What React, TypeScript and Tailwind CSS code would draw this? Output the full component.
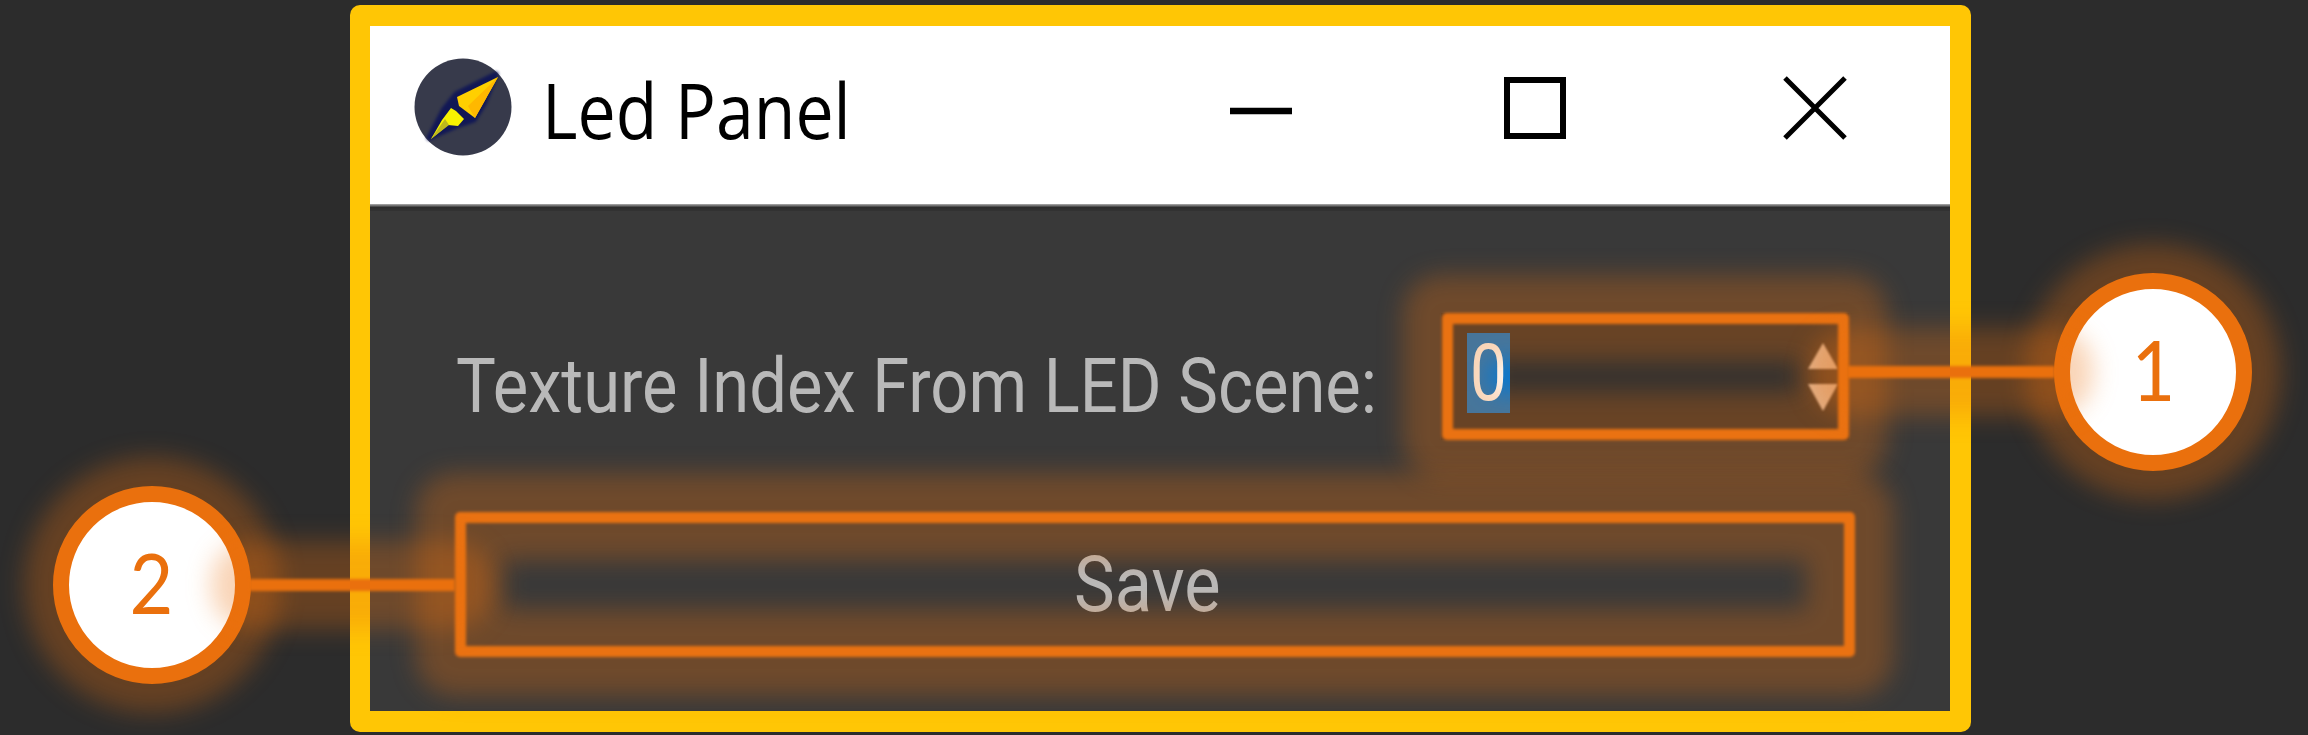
import type { ReactNode } from "react";

function Highlight({ children, className }: { children?: ReactNode; className: string }) {
  return (
    <div className={`relative shrink-0 ${className}`}>
      {children}
      <div className="absolute -inset-[38px] rounded-[38px] border-[87px] border-[#ea700d]/30 blur-[12px]" />
      <div className="absolute inset-[0.5px] rounded-[5px] border-[11px] border-[#ea7212] blur-[1.6px]" />
    </div>
  );
}

function Badge({ label, className }: { label: string; className: string }) {
  return (
    <div className={`absolute h-[198px] w-[198px] ${className}`}>
      <div className="absolute -inset-[29px] rounded-full bg-[#ea700d]/30 blur-[12px]" />
      <div className="relative flex h-full w-full items-center justify-center rounded-full border-[16px] border-[#ea700d] bg-white pb-[6px]">
        <span className="inline-block scale-x-[0.9] font-['Lato',sans-serif] text-[84px] leading-none text-[#ea700d]">{label}</span>
      </div>
    </div>
  );
}

function Connector({ className }: { className: string }) {
  return (
    <div className={`absolute h-[12px] ${className}`}>
      <div className="absolute -inset-[38px] rounded-[40px] bg-[#ea700d]/30 blur-[12px]" />
      <div className="absolute inset-0 bg-[#ea700d] blur-[1.8px]" />
    </div>
  );
}

function CompassIcon() {
  return (
    <svg viewBox="0 0 98 98" className="h-[98px] w-[98px] shrink-0">
      <circle cx="49" cy="49" r="48.5" fill="#373a4b" />
      <path className="blur-[1.5px]" d="M82 16 L42 36 L30 51 L15 80 L40 69 L60 62 L70 46 Z" fill="#0b1257" stroke="#0b1257" strokeWidth="5" strokeLinejoin="round" opacity=".85" />
      <g className="blur-[0.7px]">
        <path d="M84 19 L43 39 L45 48 L61 60 Z" fill="#ffcf00" />
        <path d="M84 19 L54 48 L61 60 Z" fill="#ffb800" />
        <path d="M37 50 L42 53 L50 61 L44 68 L34 67 L17 81 L28 62 Z" fill="#f7f200" />
        <path d="M31 61 L17 81 L35 67 Z" fill="#bdb81d" />
      </g>
    </svg>
  );
}

export default function App() {
  return (
    <div className="relative h-[735px] w-[2308px] overflow-hidden bg-[#2c2c2c] pl-[349.5px] pt-[5px]">
      <main className="h-[726.5px] w-[1621px] rounded-[10px] bg-[#ffc605] p-[20.5px]">
        <div className="flex h-full flex-col bg-[#393939]">
          <header className="flex h-[178px] shrink-0 items-start bg-white pl-[44px] pt-[32px]">
            <CompassIcon />
            <h1 className="ml-[30px] mt-[3px] w-[687px] origin-left scale-x-[0.895] whitespace-nowrap font-['Open_Sans',sans-serif] text-[76px] font-medium leading-[98px] text-black">
              Led Panel
            </h1>
            <svg viewBox="0 0 618 64" className="mt-[18px] h-[64px] w-[618px] shrink-0" fill="none" stroke="#000">
              <path d="M1 35 H63" strokeWidth="6.5" />
              <rect x="278" y="4" width="56" height="56" strokeWidth="6" />
              <path d="M556 2 L616 62 M616 2 L556 62" strokeWidth="5" />
            </svg>
          </header>
          <div className="h-[7px] shrink-0 bg-linear-to-b from-[#b0b0b0] via-[#2c2c2c] to-[#333333]" />
          <section className="flex flex-col gap-[71px] pl-[84px] pt-[102px]">
            <div className="flex h-[127.5px]">
              <label className="mt-[25px] h-[96px] w-[987px] shrink-0 whitespace-nowrap pl-[2px] font-['Roboto',sans-serif] text-[76px] leading-[96px] text-[#b9b9b9]">
                <span className="inline-block origin-left scale-x-[0.88]">Texture Index From LED Scene:</span>
              </label>
              <Highlight className="h-[127.5px] w-[408px]">
                <div className="flex h-full items-start justify-between bg-[#303030] pl-[26px] pt-[20px]">
                  <span className="flex h-[80px] w-[43px] items-center justify-center bg-[#0078d7] font-['Roboto',sans-serif] text-[80px] leading-none text-white">
                    <span className="inline-block scale-x-[0.82]">0</span>
                  </span>
                  <svg viewBox="0 0 34 70" className="mr-[9px] mt-[9px] h-[70px] w-[34px]" fill="#dfcdbf">
                    <path className="blur-[1px]" d="M17 1 L32 27 H2 Z M17 69 L32 42 H2 Z" />
                  </svg>
                </div>
              </Highlight>
            </div>
            <Highlight className="h-[146.5px] w-[1401px]">
              <button className="flex h-full w-full items-center justify-center pr-[15px] pt-[2px] font-['Roboto',sans-serif] text-[77px] leading-none text-[#b9b9b9]">
                <span className="inline-block scale-x-[0.89]">Save</span>
              </button>
            </Highlight>
          </section>
        </div>
      </main>
      <Badge label="1" className="left-[2054px] top-[272.5px]" />
      <Badge label="2" className="left-[52.5px] top-[485.5px]" />
      <Connector className="left-[1847px] top-[365.5px] w-[208px]" />
      <Connector className="left-[249px] top-[578.5px] w-[206px]" />
    </div>
  );
}
